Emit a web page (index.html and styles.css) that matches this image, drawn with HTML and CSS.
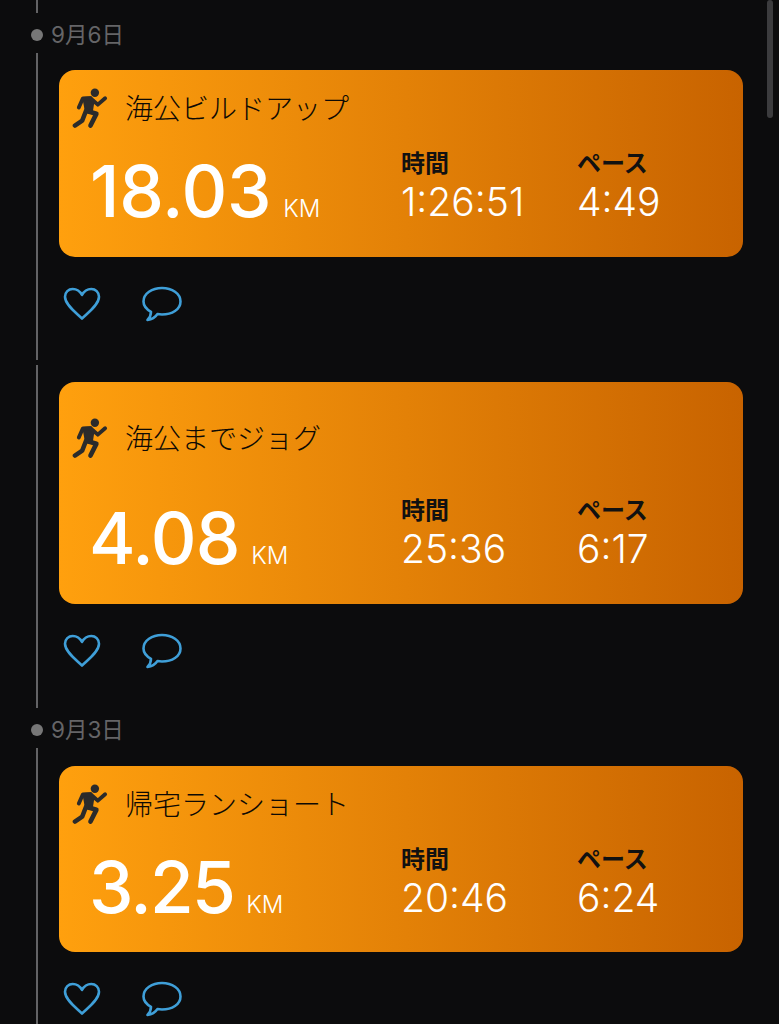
FILE: index.html
```html
<!DOCTYPE html>
<html lang="ja">
<head>
  <meta charset="UTF-8" />
  <meta name="viewport" content="width=device-width, initial-scale=1.0"/>
  <title>Activity</title>
  <link rel="stylesheet" href="styles.css">
</head>
<body>
  <svg class="icon-defs" width="0" height="0">
    <defs>
      <symbol id="runner" viewBox="0 0 38 42">
        <circle cx="23.5" cy="4.8" r="4.3" fill="#2b2b2b"/>
        <path d="M10.5 9 L20 8.5 L23 14 L21 27 L13.5 26 Z" fill="#2b2b2b"/>
        <path d="M7 20 L11 11 L19 10.5 L26.5 17 L34 10.5" fill="none" stroke="#2b2b2b" stroke-width="4" stroke-linecap="round" stroke-linejoin="round"/>
        <path d="M17 24 L25 26.5 L19 38.5" fill="none" stroke="#2b2b2b" stroke-width="4.8" stroke-linecap="round" stroke-linejoin="round"/>
        <path d="M14.5 23 L10.5 33.5 L3 38.5" fill="none" stroke="#2b2b2b" stroke-width="4.6" stroke-linecap="round" stroke-linejoin="round"/>
      </symbol>
      <symbol id="heart" viewBox="0 0 38 34">
        <path d="M19 31.5 C14 26.5 2 18 2 9.8 C2 5 5.6 2 9.7 2 C13.6 2 17 4.2 19 8 C21 4.2 24.4 2 28.3 2 C32.4 2 36 5 36 9.8 C36 18 24 26.5 19 31.5 Z" fill="none" stroke="#3f9fd8" stroke-width="2.6" stroke-linejoin="round"/>
      </symbol>
      <symbol id="bubble" viewBox="0 0 40 36">
        <path d="M20 2 C30 2 38.5 7.5 38.5 15.5 C38.5 23.5 30 28.5 20 28.5 C18.5 28.5 17 28.4 15.5 28.1 C13.5 31 9.5 33.5 5.5 34 C7.5 32 9 29 9 25.8 C4.5 23.3 1.5 19.8 1.5 15.5 C1.5 7.5 10 2 20 2 Z" fill="none" stroke="#3f9fd8" stroke-width="2.6" stroke-linejoin="round"/>
      </symbol>
    </defs>
  </svg>

  <div class="scrollbar"></div>

  <main class="feed">
    <div class="stub"></div>
    <div class="date-row"><span class="dot"></span><span class="date">9月6日</span></div>

    <section class="entry first">
      <div class="card">
        <div class="title-row">
          <svg class="run-icon"><use href="#runner"/></svg>
          <span class="title">海公ビルドアップ</span>
        </div>
        <div class="stats">
          <div class="distance"><span class="km-value">18.03</span><span class="km-unit">KM</span></div>
          <div class="metric time"><span class="metric-label">時間</span><span class="metric-value">1:26:51</span></div>
          <div class="metric"><span class="metric-label">ペース</span><span class="metric-value">4:49</span></div>
        </div>
      </div>
      <div class="reactions">
        <svg class="heart"><use href="#heart"/></svg>
        <svg class="bubble"><use href="#bubble"/></svg>
      </div>
    </section>

    <section class="entry second">
      <div class="card tall">
        <div class="title-row">
          <svg class="run-icon"><use href="#runner"/></svg>
          <span class="title">海公までジョグ</span>
        </div>
        <div class="stats">
          <div class="distance"><span class="km-value tight">4.08</span><span class="km-unit">KM</span></div>
          <div class="metric time"><span class="metric-label">時間</span><span class="metric-value">25:36</span></div>
          <div class="metric"><span class="metric-label">ペース</span><span class="metric-value">6:17</span></div>
        </div>
      </div>
      <div class="reactions">
        <svg class="heart"><use href="#heart"/></svg>
        <svg class="bubble"><use href="#bubble"/></svg>
      </div>
    </section>

    <div class="date-row"><span class="dot"></span><span class="date">9月3日</span></div>

    <section class="entry last">
      <div class="card">
        <div class="title-row">
          <svg class="run-icon"><use href="#runner"/></svg>
          <span class="title">帰宅ランショート</span>
        </div>
        <div class="stats">
          <div class="distance"><span class="km-value tighter">3.25</span><span class="km-unit">KM</span></div>
          <div class="metric time"><span class="metric-label">時間</span><span class="metric-value">20:46</span></div>
          <div class="metric"><span class="metric-label">ペース</span><span class="metric-value">6:24</span></div>
        </div>
      </div>
      <div class="reactions">
        <svg class="heart"><use href="#heart"/></svg>
        <svg class="bubble"><use href="#bubble"/></svg>
      </div>
    </section>
  </main>
</body>
</html>
```

FILE: styles.css
```css
* {
  margin: 0;
  padding: 0;
  box-sizing: border-box;
}

html, body {
  height: 1024px;
  overflow: hidden;
}

body {
  background-color: #0c0c0d;
  font-family: Inter, "Noto Sans CJK JP", sans-serif;
  color: #fff;
}

.icon-defs {
  position: absolute;
}

.scrollbar {
  position: absolute;
  top: 0;
  left: 767px;
  width: 6px;
  height: 118px;
  border-radius: 3px;
  background-color: #3c3c3e;
}

.feed {
  display: flex;
  flex-direction: column;
  padding-left: 36px;
  width: 743px;
  box-sizing: content-box;
}

.stub {
  height: 13px;
  border-left: 2px solid #636365;
}

.date-row {
  display: flex;
  align-items: center;
  height: 40px;
  padding-top: 4px;
  margin-left: -5px;
  gap: 8px;
}

.dot {
  width: 12px;
  height: 12px;
  border-radius: 50%;
  background-color: #777;
}

.date {
  font-size: 22.5px;
  line-height: 26px;
  margin-top: -1px;
  color: #656567;
}

.entry {
  border-left: 2px solid #636365;
  padding: 17px 0 0 21px;
  height: 316px;
}

.entry.first {
  height: 307px;
  margin-bottom: 5px;
}

.entry.second {
  height: 343px;
}

.entry.last {
  padding-top: 18px;
}

.card {
  display: flex;
  flex-direction: column;
  width: 684px;
  height: 187px;
  padding: 18px 14px 0 13px;
  border-radius: 16px;
  background: linear-gradient(90deg, #ffa00e 0%, #c86300 100%);
}

.card.tall {
  height: 222px;
  padding-top: 36px;
}

.entry.last .card {
  height: 186px;
}

.title-row {
  display: flex;
  align-items: center;
  height: 40px;
  gap: 16px;
}

.run-icon {
  width: 37px;
  height: 41px;
}

.title {
  font-size: 28px;
  line-height: 38px;
  margin-top: 2px;
  font-weight: 300;
  color: #0e0a04;
}

.stats {
  display: flex;
  align-items: flex-start;
  margin-top: 21px;
}

.tall .stats {
  margin-top: 38px;
}

.distance {
  display: flex;
  align-items: baseline;
  width: 329px;
  padding-top: 3px;
  padding-left: 18px;
}

.km-value {
  font-size: 71px;
  font-weight: 500;
  line-height: 78px;
  letter-spacing: -0.25px;
}

.km-value.tight {
  margin-left: -1px;
  letter-spacing: -1px;
}

.km-value.tighter {
  margin-left: -1px;
  letter-spacing: -1.75px;
}

.km-unit {
  margin-left: 12px;
  font-size: 24px;
  font-weight: 300;
}

.metric {
  display: flex;
  flex-direction: column;
}

.metric.time {
  width: 176px;
}

.metric-label {
  font-size: 24px;
  font-weight: 700;
  line-height: 30px;
  color: #111;
}

.metric-value {
  font-size: 39px;
  font-weight: 300;
  line-height: 46px;
}

.reactions {
  display: flex;
  align-items: center;
  gap: 41px;
  margin-top: 29px;
  padding-left: 4px;
}

.heart {
  width: 38px;
  height: 34px;
}

.bubble {
  width: 40px;
  height: 36px;
}
```
